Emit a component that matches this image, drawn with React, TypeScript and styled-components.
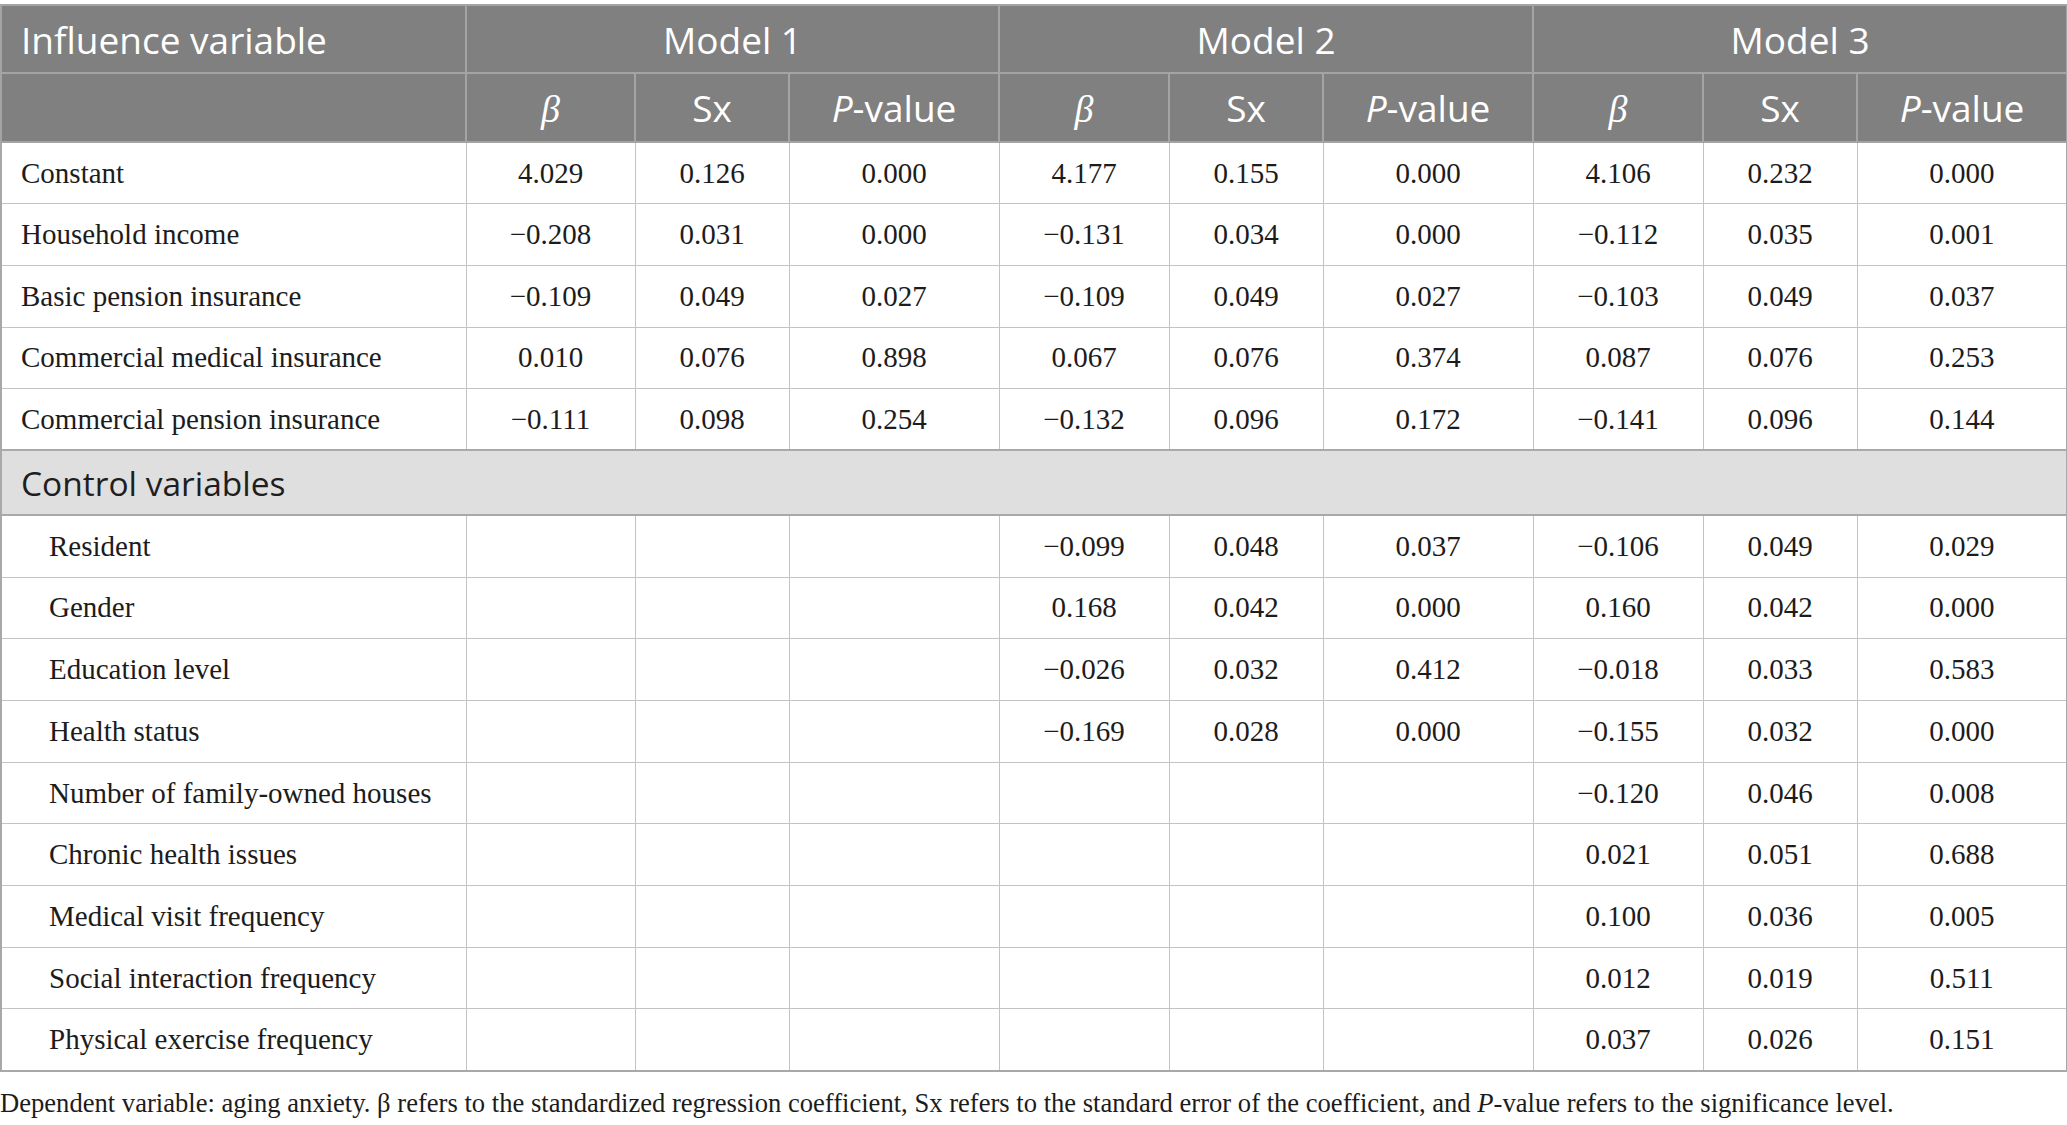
import React from 'react'
import styled, { createGlobalStyle } from 'styled-components';

interface IRow {
  label: string,
  indent?: boolean,
  values: string[],
}

const GlobalStyle = createGlobalStyle`
  * {
    box-sizing: border-box;
  }
  body {
    margin: 0;
    padding: 4px 0 0 0;
    background: #ffffff;
    font-family: "Liberation Serif", "Times New Roman", serif;
  }
`

const Table = styled.table`
  width: 2066px;
  border-collapse: collapse;
  table-layout: fixed;
  border: 2px solid #a8a8a8;
`

const HeadRow = styled.tr<{ $h: number }>`
  height: ${p => p.$h}px;
  background: #7f807f;
`

const HeadCell = styled.th<{ $left?: boolean }>`
  color: #ffffff;
  font-family: "Open Sans", "Noto Sans", sans-serif;
  font-weight: 400;
  font-size: 37px;
  text-align: ${p => p.$left ? 'left' : 'center'};
  padding: 0 0 0 ${p => p.$left ? '19px' : '0'};
  border: 2px solid #a3a4a3;
  vertical-align: middle;
  white-space: nowrap;
`

const Beta = styled.i`
  font-family: "Liberation Serif", "Times New Roman", serif;
  font-size: 38px;
`

const ItalP = styled.i`
  font-style: italic;
`

const BodyRow = styled.tr`
  height: 61.7px;
`

const LabelCell = styled.td<{ $indent?: boolean }>`
  font-size: 29px;
  color: #1c1c1c;
  padding: 0 0 0 ${p => p.$indent ? '47px' : '19px'};
  border: 1.5px solid #c3c3c3;
  white-space: nowrap;
  vertical-align: middle;
`

const NumCell = styled.td`
  font-size: 29px;
  color: #1c1c1c;
  text-align: center;
  border: 1.5px solid #c3c3c3;
  vertical-align: middle;
`

const SectionRow = styled.tr`
  height: 65px;
  background: #e0dfe0;
`

const SectionCell = styled.td`
  font-family: "Open Sans", "Noto Sans", sans-serif;
  font-size: 33.5px;
  color: #1e1e1e;
  padding-left: 19px;
  border: 2px solid #a9a9a9;
  vertical-align: middle;
`

const Note = styled.p`
  margin: 13px 0 0 0;
  font-size: 26.6px;
  line-height: 36px;
  color: #1c1c1c;
  white-space: nowrap;
`

const colWidths = [465, 169, 154, 210, 170, 154, 210, 170, 154, 210];

const mainRows: IRow[] = [
  { label: 'Constant', values: ['4.029', '0.126', '0.000', '4.177', '0.155', '0.000', '4.106', '0.232', '0.000'] },
  { label: 'Household income', values: ['−0.208', '0.031', '0.000', '−0.131', '0.034', '0.000', '−0.112', '0.035', '0.001'] },
  { label: 'Basic pension insurance', values: ['−0.109', '0.049', '0.027', '−0.109', '0.049', '0.027', '−0.103', '0.049', '0.037'] },
  { label: 'Commercial medical insurance', values: ['0.010', '0.076', '0.898', '0.067', '0.076', '0.374', '0.087', '0.076', '0.253'] },
  { label: 'Commercial pension insurance', values: ['−0.111', '0.098', '0.254', '−0.132', '0.096', '0.172', '−0.141', '0.096', '0.144'] },
];

const controlRows: IRow[] = [
  { label: 'Resident', indent: true, values: ['', '', '', '−0.099', '0.048', '0.037', '−0.106', '0.049', '0.029'] },
  { label: 'Gender', indent: true, values: ['', '', '', '0.168', '0.042', '0.000', '0.160', '0.042', '0.000'] },
  { label: 'Education level', indent: true, values: ['', '', '', '−0.026', '0.032', '0.412', '−0.018', '0.033', '0.583'] },
  { label: 'Health status', indent: true, values: ['', '', '', '−0.169', '0.028', '0.000', '−0.155', '0.032', '0.000'] },
  { label: 'Number of family-owned houses', indent: true, values: ['', '', '', '', '', '', '−0.120', '0.046', '0.008'] },
  { label: 'Chronic health issues', indent: true, values: ['', '', '', '', '', '', '0.021', '0.051', '0.688'] },
  { label: 'Medical visit frequency', indent: true, values: ['', '', '', '', '', '', '0.100', '0.036', '0.005'] },
  { label: 'Social interaction frequency', indent: true, values: ['', '', '', '', '', '', '0.012', '0.019', '0.511'] },
  { label: 'Physical exercise frequency', indent: true, values: ['', '', '', '', '', '', '0.037', '0.026', '0.151'] },
];

const renderRow = (row: IRow) => (
  <BodyRow key={row.label}>
    <LabelCell $indent={row.indent}>{row.label}</LabelCell>
    {row.values.map((v, i) => <NumCell key={i}>{v}</NumCell>)}
  </BodyRow>
)

export default function App() {
  const models = ['Model 1', 'Model 2', 'Model 3'];

  return (
    <>
      <GlobalStyle />
      <Table>
        <colgroup>
          {colWidths.map((w, i) => <col key={i} style={{ width: w }} />)}
        </colgroup>
        <thead>
          <HeadRow $h={68}>
            <HeadCell $left>Influence variable</HeadCell>
            {models.map(m => <HeadCell key={m} colSpan={3}>{m}</HeadCell>)}
          </HeadRow>
          <HeadRow $h={69}>
            <HeadCell />
            {models.map(m => (
              <React.Fragment key={m}>
                <HeadCell><Beta>β</Beta></HeadCell>
                <HeadCell>Sx</HeadCell>
                <HeadCell><ItalP>P</ItalP>-value</HeadCell>
              </React.Fragment>
            ))}
          </HeadRow>
        </thead>
        <tbody>
          {mainRows.map(renderRow)}
          <SectionRow>
            <SectionCell colSpan={10}>Control variables</SectionCell>
          </SectionRow>
          {controlRows.map(renderRow)}
        </tbody>
      </Table>
      <Note>
        Dependent variable: aging anxiety. β refers to the standardized regression coefficient, Sx refers to the standard error of the coefficient, and <i>P</i>-value refers to the significance level.
      </Note>
    </>
  )
}
